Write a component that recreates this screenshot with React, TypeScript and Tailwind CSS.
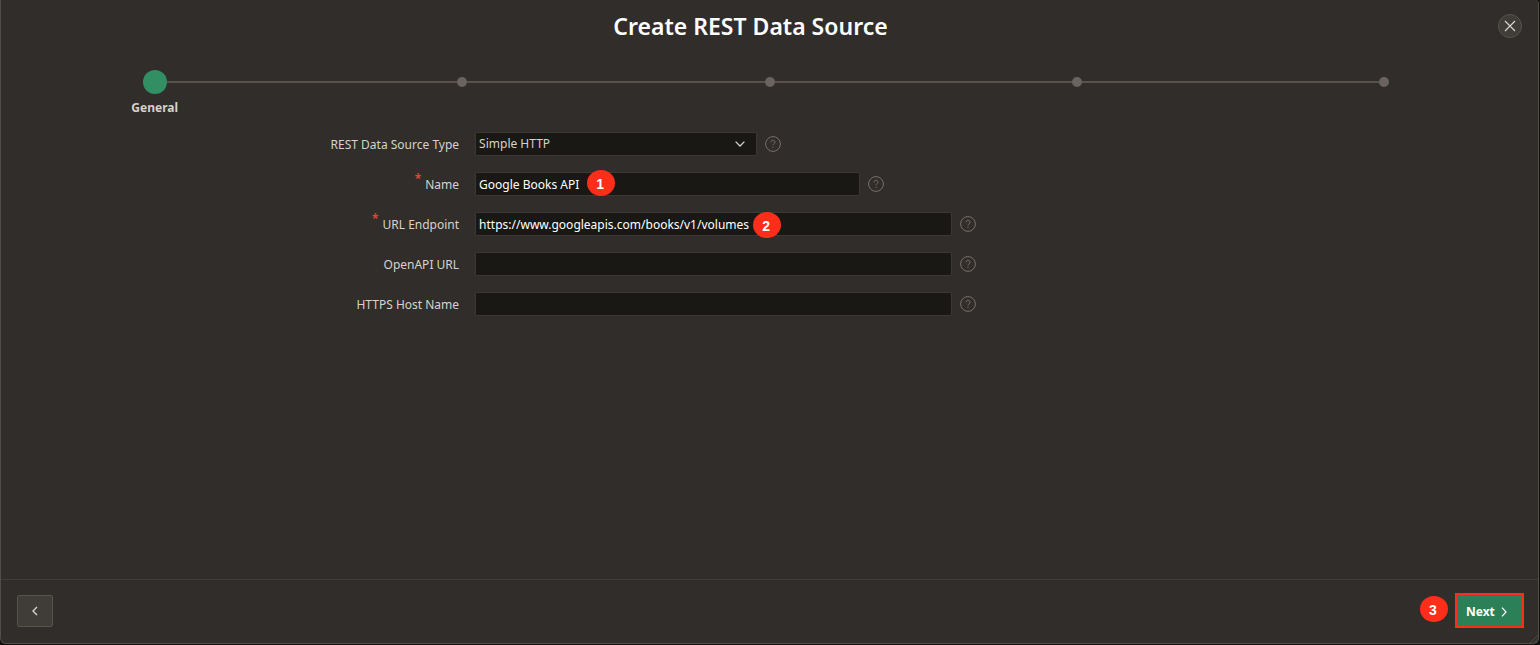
import type { ReactNode } from "react";

const STEPS = ["General", "", "", "", ""];

function Marker({ n, className = "" }: { n: number; className?: string }) {
  return (
    <span
      className={`flex h-[26px] w-7 items-center justify-center rounded-[50%] bg-[#fe2e1b] pt-0.5 pr-0.5 font-['Liberation_Sans',sans-serif] text-sm font-bold text-white ${className}`}
    >
      {n}
    </span>
  );
}

function HelpButton({ topic }: { topic: string }) {
  return (
    <button type="button" aria-label={`Help: ${topic}`} className="shrink-0 text-[#75706b]">
      <svg viewBox="0 0 16 16" className="size-4" fill="none" stroke="currentColor">
        <circle cx="8" cy="8" r="7.4" />
        <path d="M6 6.3c0-1.2.8-2 2-2s2 .8 2 1.9c0 1.5-2 1.5-2 3.1" />
        <path d="M8 10.7v1.2" />
      </svg>
    </button>
  );
}

function Field({
  id,
  label,
  required = false,
  children,
}: {
  id: string;
  label: string;
  required?: boolean;
  children: ReactNode;
}) {
  return (
    <div className="flex h-10 items-center">
      <label htmlFor={id} className="flex w-[30%] justify-end pt-0.5 pr-[3px] text-xs leading-6 text-[#d6d2cd]">
        {required && <span className="pr-1 text-xs leading-3 font-bold text-[#d4483a]">*</span>}
        {label}
      </label>
      <div className="flex min-w-0 flex-1 items-center gap-2 pl-[13px]">
        {children}
        <HelpButton topic={label} />
      </div>
    </div>
  );
}

const control =
  "block h-6 w-full appearance-none rounded-xs border border-[#3b3834] bg-[#191815] px-[3px] text-xs outline-none";

export default function App() {
  return (
    <div className="flex min-h-screen flex-col bg-[#11100f] pr-px pb-px font-['Noto_Sans',sans-serif]">
      <main className="relative flex flex-1 flex-col rounded-b-md rounded-tr-sm border-x border-b border-[#514d48] bg-[#312d2a]">
        <header className="flex h-[52px] items-center pr-4 pl-2">
          <h1 className="flex-1 pr-1.5 text-center text-[23px] font-semibold text-white">
            Create REST Data Source
          </h1>
          <button
            type="button"
            aria-label="Close"
            className="flex size-6 items-center justify-center rounded-full border border-[#57534b] bg-[#403c38] text-[#d6d2cd]"
          >
            <svg viewBox="0 0 12 12" className="size-3" fill="none" stroke="currentColor" strokeWidth="1.2">
              <path d="M1 1l10 10M11 1L1 11" />
            </svg>
          </button>
        </header>

        <ol className="grid grid-cols-5 pt-[18px]">
          {STEPS.map((step, i) => (
            <li key={i} className="flex flex-col items-center">
              <div className="flex h-6 w-full items-center">
                <span className={i > 0 ? "h-0.5 flex-1 bg-[#57534b]" : "flex-1"} />
                <span
                  className={
                    i === 0 ? "size-6 rounded-full bg-[#318f63]" : "size-2.5 rounded-full bg-[#6b635f]"
                  }
                />
                <span className={i < STEPS.length - 1 ? "h-0.5 flex-1 bg-[#57534b]" : "flex-1"} />
              </div>
              {step && <span className="pt-1.5 text-xs leading-4 font-bold text-[#d6d2cd]">{step}</span>}
            </li>
          ))}
        </ol>

        <form id="source" className="flex-1 pt-2">
          <Field id="type" label="REST Data Source Type">
            <div className="relative w-[282px]">
              <select id="type" className={`${control} text-[#d6d2cd]`}>
                <option>Simple HTTP</option>
              </select>
              <svg
                viewBox="0 0 10 6"
                className="pointer-events-none absolute top-[9px] right-3 h-1.5 w-2.5"
                fill="none"
                stroke="#d6d2cd"
                strokeWidth="1.3"
              >
                <path d="M.6.6L5 5 9.4.6" />
              </svg>
            </div>
          </Field>
          <Field id="name" label="Name" required>
            <div className="relative w-[385px]">
              <input id="name" type="text" defaultValue="Google Books API" className={`${control} text-white`} />
              <Marker n={1} className="absolute -top-0.5 left-28" />
            </div>
          </Field>
          <Field id="endpoint" label="URL Endpoint" required>
            <div className="relative w-[477px]">
              <input
                id="endpoint"
                type="text"
                defaultValue="https://www.googleapis.com/books/v1/volumes"
                className={`${control} text-white`}
              />
              <Marker n={2} className="absolute top-0 left-[278px]" />
            </div>
          </Field>
          <Field id="openapi" label="OpenAPI URL">
            <div className="w-[477px]">
              <input id="openapi" type="text" className={`${control} text-white`} />
            </div>
          </Field>
          <Field id="host" label="HTTPS Host Name">
            <div className="w-[477px]">
              <input id="host" type="text" className={`${control} text-white`} />
            </div>
          </Field>
        </form>

        <footer className="flex h-16 items-center justify-between border-t border-[#403c38] pr-3.5 pb-0.5 pl-4">
          <button
            type="button"
            aria-label="Previous"
            className="flex h-8 w-9 items-center justify-center rounded-xs border border-[#57534b] bg-[#403c38] text-[#d6d2cd]"
          >
            <svg viewBox="0 0 6 10" className="h-2.5 w-1.5" fill="none" stroke="currentColor" strokeWidth="1.4">
              <path d="M5 1L1 5l4 4" />
            </svg>
          </button>
          <div className="flex items-center gap-[7px]">
            <Marker n={3} className="mb-1" />
            <button
              type="submit"
              form="source"
              className="flex h-[35px] w-[69px] items-center gap-1.5 border-[#fe2e1b] border-2 bg-[#2c8058] pt-0.5 pl-[9px] text-xs font-bold text-white"
            >
              Next
              <svg viewBox="0 0 6 10" className="h-2.5 w-1.5" fill="none" stroke="currentColor" strokeWidth="1.2">
                <path d="M1 .6L5 5 1 9.4" />
              </svg>
            </button>
          </div>
        </footer>
        <svg
          viewBox="0 0 9 9"
          aria-hidden="true"
          className="absolute right-0 bottom-0 size-2"
          fill="none"
          stroke="#514d48"
        >
          <path d="M0 9L9 0M4 9L9 4" />
        </svg>
      </main>
    </div>
  );
}
